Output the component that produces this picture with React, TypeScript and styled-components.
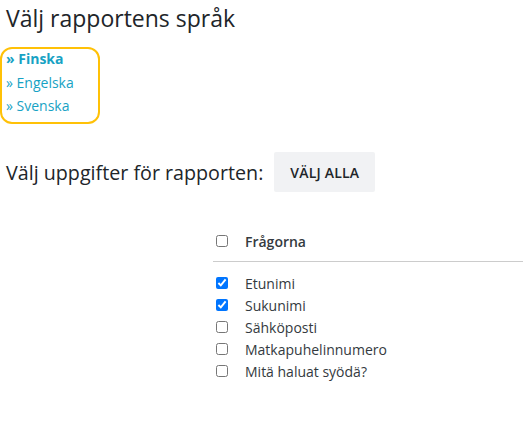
import React, {useState} from 'react'
import styled, {createGlobalStyle} from 'styled-components'

const GlobalStyle = createGlobalStyle`
  html, body {
    margin: 0;
    padding: 0;
    background: #ffffff;
  }
  body {
    font-family: 'Open Sans', 'Noto Sans', sans-serif;
    color: #212529;
  }
`

type Field = {
  label: string
  checked: boolean
}

const initialFields: Field[] = [
  {label: 'Etunimi', checked: true},
  {label: 'Sukunimi', checked: true},
  {label: 'Sähköposti', checked: false},
  {label: 'Matkapuhelinnumero', checked: false},
  {label: 'Mitä haluat syödä?', checked: false},
]

const languages = ['Finska', 'Engelska', 'Svenska']

export default function App() {
  const [selectedLang, setSelectedLang] = useState('Finska')
  const [fields, setFields] = useState<Field[]>(initialFields)

  const allChecked = fields.every(f => f.checked)

  const toggle = (idx: number) => {
    setFields(prev => prev.map((f, i) => (i === idx ? {...f, checked: !f.checked} : f)))
  }

  const setAll = (value: boolean) => {
    setFields(prev => prev.map(f => ({...f, checked: value})))
  }

  return (
    <Page>
      <GlobalStyle />
      <Title>Välj rapportens språk</Title>
      <LangBox>
        {languages.map(lang => (
          <LangLink key={lang} isActive={selectedLang === lang} onClick={() => setSelectedLang(lang)}>
            » {lang}
          </LangLink>
        ))}
      </LangBox>

      <SelectRow>
        <SectionLabel>Välj uppgifter för rapporten:</SectionLabel>
        <SelectAllButton onClick={() => setAll(true)}>Välj alla</SelectAllButton>
      </SelectRow>

      <FieldTable>
        <HeaderRow>
          <CheckCell>
            <Checkbox type="checkbox" checked={allChecked} onChange={() => setAll(!allChecked)} />
          </CheckCell>
          <HeaderLabel>Frågorna</HeaderLabel>
        </HeaderRow>
        <FieldList>
          {fields.map((field, idx) => (
            <FieldRow key={field.label}>
              <CheckCell>
                <Checkbox type="checkbox" checked={field.checked} onChange={() => toggle(idx)} />
              </CheckCell>
              <FieldLabel>{field.label}</FieldLabel>
            </FieldRow>
          ))}
        </FieldList>
      </FieldTable>
    </Page>
  )
}

const Page = styled.div`
  display: flex;
  flex-direction: column;
  padding: 0 0 0 6px;
  width: 523px;
  box-sizing: border-box;
`

const Title = styled.h2`
  margin: 4px 0 0;
  font-size: 23px;
  font-weight: 400;
  line-height: 28px;
  color: #212529;
`

const LangBox = styled.div`
  display: flex;
  flex-direction: column;
  gap: 3.5px;
  align-self: flex-start;
  margin: 15px 0 0 -6px;
  padding: 0 6px 6px 4px;
  width: 100px;
  box-sizing: border-box;
  border: 2px solid #ffc107;
  border-radius: 12px;
`

const LangLink = styled.a<{isActive: boolean}>`
  font-size: 14px;
  line-height: 20px;
  color: #17a2c4;
  font-weight: ${props => (props.isActive ? 700 : 400)};
  cursor: pointer;
  white-space: nowrap;
`

const SelectRow = styled.div`
  display: flex;
  align-items: center;
  gap: 11px;
  margin-top: 28px;
`

const SectionLabel = styled.span`
  font-size: 19.7px;
  color: #212529;
`

const SelectAllButton = styled.button`
  height: 40px;
  padding: 0 16px;
  border: none;
  border-radius: 2px;
  background: #f1f2f4;
  color: #212529;
  font-family: 'Open Sans', 'Noto Sans', sans-serif;
  font-size: 14px;
  font-weight: 600;
  letter-spacing: 0.2px;
  text-transform: uppercase;
  cursor: pointer;
`

const FieldTable = styled.div`
  display: flex;
  flex-direction: column;
  margin: 29px 0 0 207px;
`

const HeaderRow = styled.div`
  display: flex;
  align-items: center;
  height: 40px;
  border-bottom: 1px solid #cccccc;
`

const FieldList = styled.div`
  display: flex;
  flex-direction: column;
  padding-top: 10px;
`

const FieldRow = styled.div`
  display: flex;
  align-items: center;
  height: 22px;
`

const CheckCell = styled.div`
  width: 32px;
  display: flex;
  align-items: center;
`

const Checkbox = styled.input`
  margin: 0 0 0 3px;
  width: 12px;
  height: 12px;
`

const HeaderLabel = styled.span`
  font-size: 14px;
  font-weight: 600;
  color: #343a40;
`

const FieldLabel = styled.span`
  font-size: 14px;
  color: #343a40;
`
